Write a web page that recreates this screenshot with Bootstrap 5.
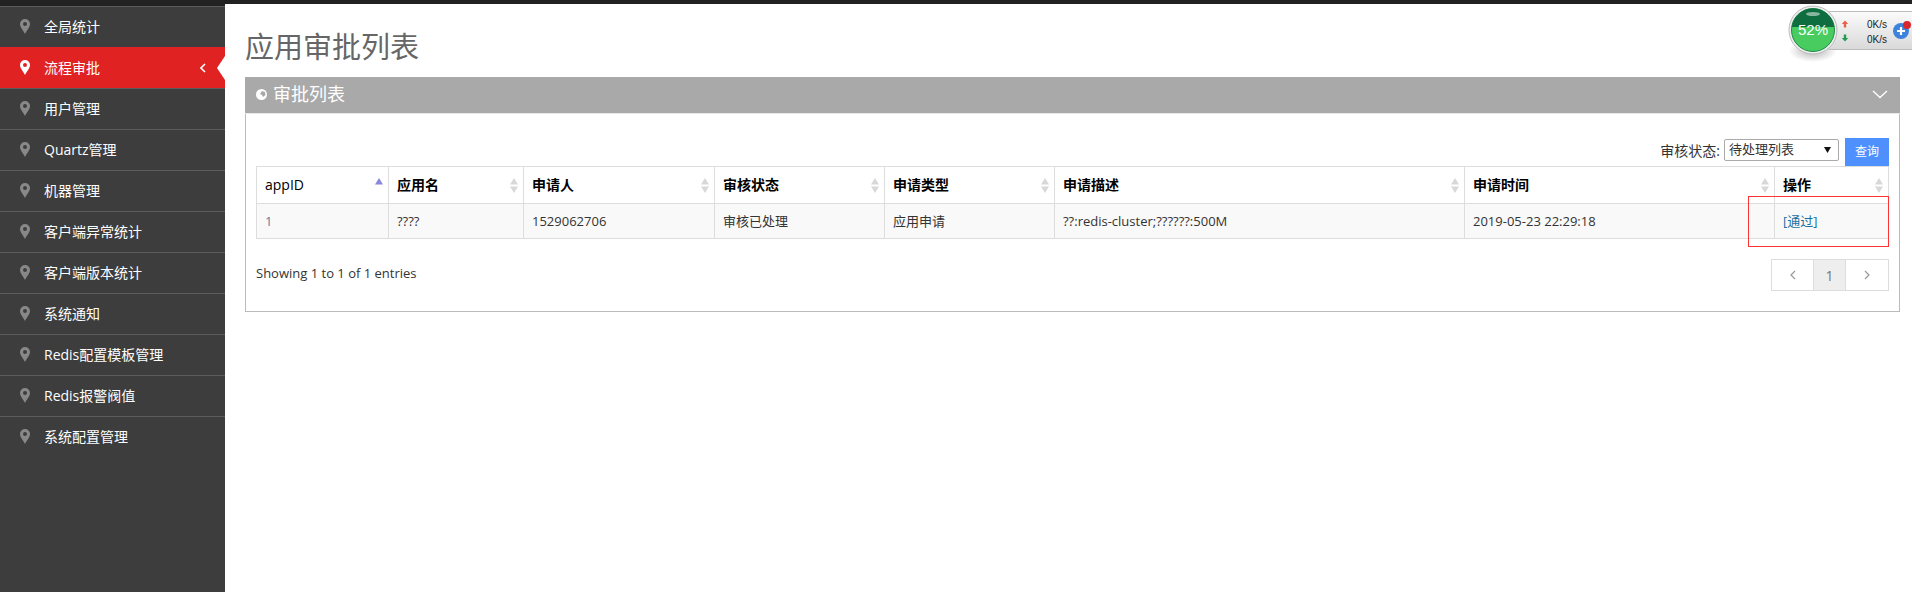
<!DOCTYPE html>
<html lang="en">
<head>
    <meta charset="UTF-8">
    <title>应用审批列表</title>
    <link href="https://cdn.jsdelivr.net/npm/bootstrap@5.3.0/dist/css/bootstrap.min.css" rel="stylesheet">
    <style>
        html, body { height: 100%; }
        body {
            background: #fff;
            color: #333;
            font-family: "Open Sans", "Noto Sans CJK SC", sans-serif;
            font-size: 13px;
            overflow: hidden;
        }
        .top-strip { height: 4px; background: #222; }
        .page-wrap { height: 588px; }
        .side-menu { width: 225px; background: #3d3d3d; border-top: 2px solid #222; flex: none; }
        .side-link {
            height: 41px;
            padding-left: 20px;
            padding-bottom: 2px;
            color: #fff;
            font-size: 14px;
            border-top: 1px solid #5c5c5c;
            text-decoration: none;
        }
        .side-link .pin { fill: #888; margin-right: 14px; }
        .side-link.current { background: #e02222; border-top-color: #e02222; position: relative; }
        .side-link.current .pin { fill: #fff; }
        .side-arrow {
            position: absolute; right: 0; top: 8px;
            border-top: 12px solid transparent; border-bottom: 12px solid transparent; border-right: 8px solid #fff;
        }
        .side-chev { position: absolute; right: 19px; top: 15px; }
        .main-area { padding: 0 12px 0 20px; flex: 1; min-width: 0; }
        .page-title { font-size: 29px; font-weight: 400; color: #666; margin: 0; height: 73px; line-height: 86px; }
        .list-panel { border: 1px solid #bbb; border-top: 0; height: 235px; }
        .panel-head { height: 37px; background: #a9a9a9; color: #fff; font-size: 18px; padding: 0 12px 2px 11px; margin: 0 -1px; border-bottom: 1px solid #e8e8e8; }
        .panel-head .globe-icon { margin-right: 6px; }
        .panel-body { padding: 0 10px; }
        .filter-row { height: 52px; }
        .filter-label { font-size: 14px; margin-bottom: 5px; }
        .filter-row select {
            width: 115px; height: 22px; font-size: 13px; margin: 0 6px 5px 4px;
            border: 1px solid #aaa; border-radius: 2px; padding: 0 0 0 4px;
            font-family: inherit; color: #333;
            appearance: none;
            background: #fff url("data:image/svg+xml,%3Csvg xmlns='http://www.w3.org/2000/svg' width='7' height='6'%3E%3Cpath d='M0 0h7L3.500 6z' fill='%23111'/%3E%3C/svg%3E") no-repeat right 7px center;
        }
        .query-btn { width: 44px; height: 28px; padding: 0; background: #4d90fe; color: #fff; font-size: 12px; border: 0; border-radius: 0; }
        .apply-table { table-layout: fixed; width: 1632px; margin: 0; border-color: #ddd; color: #333; }
        .apply-table th { font-size: 14px; font-weight: 700; color: #000; height: 37px; padding: 0 8px 2px; vertical-align: middle; position: relative; }
        .apply-table th.plain-head { font-weight: 400; }
        .apply-table td { height: 35px; padding: 2px 8px 0; vertical-align: middle; background: #f9f9f9; font-size: 13px; }
        .apply-table a { color: #1a6f9f; text-decoration: none; }
        .apply-table td.num-cell { color: #5f7f9f; }
        .sort-mark { position: absolute; right: 5px; top: 11px; }
        .foot-row { padding-top: 20px; }
        .entries-text { color: #333; padding-top: 5px; }
        .pager-list { margin: 0; --bs-pagination-border-color: #ddd; --bs-pagination-border-radius: 0; }
        .pager-list .page-link { height: 32px; padding: 0; color: #999; font-size: 14px; display: flex; align-items: center; justify-content: center; }
        .pager-list li:nth-child(1) .page-link { width: 43px; }
        .pager-list li:nth-child(2) .page-link { width: 33px; background: #eee; color: #777; border-color: #ddd; }
        .pager-list li:nth-child(3) .page-link { width: 44px; }
        .red-mark { position: absolute; left: 1748px; top: 196px; width: 141px; height: 51px; border: 1px solid #f33; }
        .speed-widget { position: absolute; left: 1788px; top: 4px; }
        .speed-widget text { font-family: "Liberation Sans", sans-serif; }
    </style>
</head>
<body>
<div class="top-strip"></div>
<div class="d-flex page-wrap">
    <div class="side-menu">
        <a class="side-link d-flex align-items-center" href="#"><svg class="pin" width="10" height="15" viewBox="0 0 10 15"><path fill-rule="evenodd" d="M5 0a5 5 0 0 1 5 5c0 3.500-3.500 6.500-5 10C3.500 11.500 0 8.500 0 5a5 5 0 0 1 5-5zm0 3a2 2 0 1 0 0 4 2 2 0 0 0 0-4z"/></svg>全局统计</a>
        <a class="side-link current d-flex align-items-center" href="#"><svg class="pin" width="10" height="15" viewBox="0 0 10 15"><path fill-rule="evenodd" d="M5 0a5 5 0 0 1 5 5c0 3.500-3.500 6.500-5 10C3.500 11.500 0 8.500 0 5a5 5 0 0 1 5-5zm0 3a2 2 0 1 0 0 4 2 2 0 0 0 0-4z"/></svg>流程审批<svg class="side-chev" width="6" height="10" viewBox="0 0 6 10"><path d="M5 1L1 5l4 4" fill="none" stroke="#fff" stroke-width="1.600"/></svg><span class="side-arrow"></span></a>
        <a class="side-link d-flex align-items-center" href="#"><svg class="pin" width="10" height="15" viewBox="0 0 10 15"><path fill-rule="evenodd" d="M5 0a5 5 0 0 1 5 5c0 3.500-3.500 6.500-5 10C3.500 11.500 0 8.500 0 5a5 5 0 0 1 5-5zm0 3a2 2 0 1 0 0 4 2 2 0 0 0 0-4z"/></svg>用户管理</a>
        <a class="side-link d-flex align-items-center" href="#"><svg class="pin" width="10" height="15" viewBox="0 0 10 15"><path fill-rule="evenodd" d="M5 0a5 5 0 0 1 5 5c0 3.500-3.500 6.500-5 10C3.500 11.500 0 8.500 0 5a5 5 0 0 1 5-5zm0 3a2 2 0 1 0 0 4 2 2 0 0 0 0-4z"/></svg>Quartz管理</a>
        <a class="side-link d-flex align-items-center" href="#"><svg class="pin" width="10" height="15" viewBox="0 0 10 15"><path fill-rule="evenodd" d="M5 0a5 5 0 0 1 5 5c0 3.500-3.500 6.500-5 10C3.500 11.500 0 8.500 0 5a5 5 0 0 1 5-5zm0 3a2 2 0 1 0 0 4 2 2 0 0 0 0-4z"/></svg>机器管理</a>
        <a class="side-link d-flex align-items-center" href="#"><svg class="pin" width="10" height="15" viewBox="0 0 10 15"><path fill-rule="evenodd" d="M5 0a5 5 0 0 1 5 5c0 3.500-3.500 6.500-5 10C3.500 11.500 0 8.500 0 5a5 5 0 0 1 5-5zm0 3a2 2 0 1 0 0 4 2 2 0 0 0 0-4z"/></svg>客户端异常统计</a>
        <a class="side-link d-flex align-items-center" href="#"><svg class="pin" width="10" height="15" viewBox="0 0 10 15"><path fill-rule="evenodd" d="M5 0a5 5 0 0 1 5 5c0 3.500-3.500 6.500-5 10C3.500 11.500 0 8.500 0 5a5 5 0 0 1 5-5zm0 3a2 2 0 1 0 0 4 2 2 0 0 0 0-4z"/></svg>客户端版本统计</a>
        <a class="side-link d-flex align-items-center" href="#"><svg class="pin" width="10" height="15" viewBox="0 0 10 15"><path fill-rule="evenodd" d="M5 0a5 5 0 0 1 5 5c0 3.500-3.500 6.500-5 10C3.500 11.500 0 8.500 0 5a5 5 0 0 1 5-5zm0 3a2 2 0 1 0 0 4 2 2 0 0 0 0-4z"/></svg>系统通知</a>
        <a class="side-link d-flex align-items-center" href="#"><svg class="pin" width="10" height="15" viewBox="0 0 10 15"><path fill-rule="evenodd" d="M5 0a5 5 0 0 1 5 5c0 3.500-3.500 6.500-5 10C3.500 11.500 0 8.500 0 5a5 5 0 0 1 5-5zm0 3a2 2 0 1 0 0 4 2 2 0 0 0 0-4z"/></svg>Redis配置模板管理</a>
        <a class="side-link d-flex align-items-center" href="#"><svg class="pin" width="10" height="15" viewBox="0 0 10 15"><path fill-rule="evenodd" d="M5 0a5 5 0 0 1 5 5c0 3.500-3.500 6.500-5 10C3.500 11.500 0 8.500 0 5a5 5 0 0 1 5-5zm0 3a2 2 0 1 0 0 4 2 2 0 0 0 0-4z"/></svg>Redis报警阀值</a>
        <a class="side-link d-flex align-items-center" href="#"><svg class="pin" width="10" height="15" viewBox="0 0 10 15"><path fill-rule="evenodd" d="M5 0a5 5 0 0 1 5 5c0 3.500-3.500 6.500-5 10C3.500 11.500 0 8.500 0 5a5 5 0 0 1 5-5zm0 3a2 2 0 1 0 0 4 2 2 0 0 0 0-4z"/></svg>系统配置管理</a>
    </div>
    <div class="main-area">
        <h3 class="page-title">应用审批列表</h3>
        <div class="list-panel">
            <div class="panel-head d-flex align-items-center">
                <svg class="globe-icon" width="11" height="11" viewBox="0 0 11 11"><circle cx="5.500" cy="5.500" r="5.500" fill="#fff"/><path d="M6 2l3 1 .5 3-2.500 2-1-2-2-1z" fill="#a9a9a9"/></svg>
                <span>审批列表</span>
                <svg class="ms-auto" width="16" height="9" viewBox="0 0 16 9"><path d="M1 1l7 6.500L15 1" fill="none" stroke="#fff" stroke-width="1.400"/></svg>
            </div>
            <div class="panel-body">
                <div class="filter-row d-flex justify-content-end align-items-end">
                    <span class="filter-label">审核状态:</span>
                    <select><option>待处理列表</option></select>
                    <button class="btn query-btn">查询</button>
                </div>
                <table class="table table-bordered apply-table">
                    <colgroup>
                        <col style="width:132px"><col style="width:135px"><col style="width:191px"><col style="width:170px"><col style="width:170px"><col style="width:410px"><col style="width:310px"><col style="width:114px">
                    </colgroup>
                    <thead>
                        <tr>
                            <th class="plain-head">appID<svg class="sort-mark" width="8" height="15" viewBox="0 0 8 15"><path d="M4 0L8 6.500H0z" fill="#8888dd"/></svg></th>
                            <th>应用名<svg class="sort-mark" width="8" height="15" viewBox="0 0 8 15"><path d="M4 0L8 6.500H0zM4 15L0 8.500h8z" fill="#d8d8d8"/></svg></th>
                            <th>申请人<svg class="sort-mark" width="8" height="15" viewBox="0 0 8 15"><path d="M4 0L8 6.500H0zM4 15L0 8.500h8z" fill="#d8d8d8"/></svg></th>
                            <th>审核状态<svg class="sort-mark" width="8" height="15" viewBox="0 0 8 15"><path d="M4 0L8 6.500H0zM4 15L0 8.500h8z" fill="#d8d8d8"/></svg></th>
                            <th>申请类型<svg class="sort-mark" width="8" height="15" viewBox="0 0 8 15"><path d="M4 0L8 6.500H0zM4 15L0 8.500h8z" fill="#d8d8d8"/></svg></th>
                            <th>申请描述<svg class="sort-mark" width="8" height="15" viewBox="0 0 8 15"><path d="M4 0L8 6.500H0zM4 15L0 8.500h8z" fill="#d8d8d8"/></svg></th>
                            <th>申请时间<svg class="sort-mark" width="8" height="15" viewBox="0 0 8 15"><path d="M4 0L8 6.500H0zM4 15L0 8.500h8z" fill="#d8d8d8"/></svg></th>
                            <th>操作<svg class="sort-mark" width="8" height="15" viewBox="0 0 8 15"><path d="M4 0L8 6.500H0zM4 15L0 8.500h8z" fill="#d8d8d8"/></svg></th>
                        </tr>
                    </thead>
                    <tbody>
                        <tr>
                            <td class="num-cell">1</td>
                            <td>????</td>
                            <td>1529062706</td>
                            <td>审核已处理</td>
                            <td>应用申请</td>
                            <td>??:redis-cluster;??????:500M</td>
                            <td>2019-05-23 22:29:18</td>
                            <td><a href="#">[通过]</a></td>
                        </tr>
                    </tbody>
                </table>
                <div class="foot-row d-flex justify-content-between align-items-start">
                    <div class="entries-text">Showing 1 to 1 of 1 entries</div>
                    <ul class="pagination pager-list">
                        <li class="page-item"><a class="page-link" href="#"><svg width="6" height="10" viewBox="0 0 6 10"><path d="M5 1L1 5l4 4" fill="none" stroke="#999" stroke-width="1.200"/></svg></a></li>
                        <li class="page-item"><a class="page-link" href="#">1</a></li>
                        <li class="page-item"><a class="page-link" href="#"><svg width="6" height="10" viewBox="0 0 6 10"><path d="M1 1l4 4-4 4" fill="none" stroke="#999" stroke-width="1.200"/></svg></a></li>
                    </ul>
                </div>
            </div>
        </div>
    </div>
</div>
<div class="red-mark"></div>
<svg class="speed-widget" width="124" height="62" viewBox="0 0 124 62">
    <defs>
        <linearGradient id="pillFill" x1="0" y1="0" x2="0" y2="1"><stop offset="0" stop-color="#fbfbfb"/><stop offset="1" stop-color="#d9d9d9"/></linearGradient>
        <radialGradient id="ballShade" cx="0.5" cy="0.5" r="0.5"><stop offset="0" stop-color="#000" stop-opacity="0.3"/><stop offset="1" stop-color="#000" stop-opacity="0"/></radialGradient>
    </defs>
    <ellipse cx="25" cy="47" rx="24" ry="11" fill="url(#ballShade)"/>
    <rect x="25" y="7.500" width="120" height="38" rx="19" fill="url(#pillFill)" stroke="#bbb"/>
    <circle cx="25" cy="26" r="24" fill="#eee" stroke="#bbb"/>
    <circle cx="25" cy="26" r="21.500" fill="#48cc60" stroke="#1d8a4a"/>
    <path d="M3.710 23A21.500 21.500 0 0 1 46.290 23z" fill="#0f6e40"/>
    <ellipse cx="25" cy="10" rx="7" ry="2" fill="#fff" opacity="0.500"/>
    <text x="25" y="31" text-anchor="middle" font-size="15" fill="#fff">52%</text>
    <path d="M57 16.500l3.200 3.500h-2v3.500h-2.400V20h-2z" fill="#e8604a"/>
    <path d="M57 37.500l3.200-3.500h-2v-3.500h-2.400V34h-2z" fill="#259b52"/>
    <text x="99" y="24" text-anchor="end" font-size="10" fill="#222">0K/s</text>
    <text x="99" y="39" text-anchor="end" font-size="10" fill="#222">0K/s</text>
    <circle cx="113" cy="27" r="8" fill="#3d82dc"/>
    <path d="M109 27h8M113 23v8" stroke="#fff" stroke-width="2.200"/>
    <circle cx="119" cy="21" r="4" fill="#d8262c"/>
</svg>
<script src="https://cdn.jsdelivr.net/npm/bootstrap@5.3.0/dist/js/bootstrap.bundle.min.js"></script>
</body>
</html>
